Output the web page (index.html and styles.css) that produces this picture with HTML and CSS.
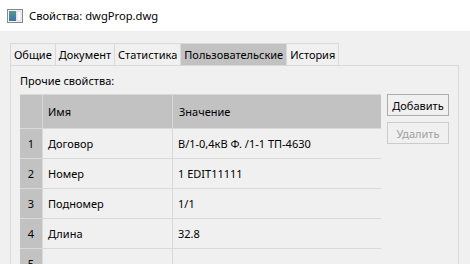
FILE: index.html
```html
<!DOCTYPE html>
<html lang="ru">
<head>
<meta charset="utf-8">
<title>Свойства: dwgProp.dwg</title>
<link rel="stylesheet" href="styles.css">
</head>
<body>
<div class="window">
  <div class="titlebar">
    <svg class="appicon" width="16" height="14" viewBox="0 0 16 14">
      <defs>
        <linearGradient id="g" x1="0" y1="0" x2="0" y2="1">
          <stop offset="0" stop-color="#5a9a8a"/>
          <stop offset="1" stop-color="#3f6fb0"/>
        </linearGradient>
      </defs>
      <rect x="0.5" y="0.5" width="15" height="13" fill="#f4f4f4" stroke="#8a8a8a"/>
      <rect x="2" y="2" width="7" height="10" fill="url(#g)"/>
      <rect x="10" y="2" width="4" height="10" fill="#ffffff" stroke="#c8c8c8" stroke-width="0.6"/>
    </svg>
    <span class="title">Свойства: dwgProp.dwg</span>
  </div>
  <div class="content">
    <div class="tabs">
      <div class="tab">Общие</div>
      <div class="tab">Документ</div>
      <div class="tab">Статистика</div>
      <div class="tab active">Пользовательские</div>
      <div class="tab">История</div>
    </div>
    <div class="pane">
      <div class="label">Прочие свойства:</div>
      <div class="body">
        <div class="grid">
          <div class="corner"></div>
          <div class="hcell">Имя</div>
          <div class="hcell">Значение</div>

          <div class="num">1</div>
          <div class="cell">Договор</div>
          <div class="cell">В/1-0,4кВ Ф. /1-1 ТП-4630</div>

          <div class="num">2</div>
          <div class="cell">Номер</div>
          <div class="cell">1 EDIT11111</div>

          <div class="num">3</div>
          <div class="cell">Подномер</div>
          <div class="cell">1/1</div>

          <div class="num">4</div>
          <div class="cell">Длина</div>
          <div class="cell">32.8</div>

          <div class="num">5</div>
          <div class="cell"></div>
          <div class="cell"></div>
        </div>
        <div class="buttons">
          <button class="btn">Добавить</button>
          <button class="btn" disabled>Удалить</button>
        </div>
      </div>
    </div>
  </div>
</div>
</body>
</html>
```

FILE: styles.css
```css
html, body {
  margin: 0;
  padding: 0;
}
body {
  width: 470px;
  height: 264px;
  overflow: hidden;
  background: #f0f0f0;
  font-family: "Noto Sans", "Liberation Sans", sans-serif;
  font-size: 11px;
  color: #000;
}
.window {
  display: flex;
  flex-direction: column;
  height: 264px;
}
.titlebar {
  height: 31px;
  background: #ffffff;
  display: flex;
  align-items: center;
  padding-left: 7px;
  flex-shrink: 0;
}
.appicon {
  display: block;
  margin-right: 6px;
  margin-top: 1px;
}
.title {
  font-size: 11.2px;
  line-height: 16px;
}
.content {
  padding: 12px 11px 0 10px;
  flex: 1;
  display: flex;
  flex-direction: column;
}
.tabs {
  display: flex;
  height: 22px;
}
.tab {
  border: 1px solid #d9d9d9;
  border-bottom: none;
  border-right: none;
  padding: 0 3px;
  line-height: 21px;
  background: #f0f0f0;
}
.tab:last-child {
  border-right: 1px solid #d9d9d9;
}
.tab.active {
  background: #c2c2c2;
}
.pane {
  flex: 1;
  border: 1px solid #d9d9d9;
  border-bottom: none;
  padding: 0 0 0 9px;
}
.label {
  height: 28px;
  line-height: 30px;
}
.body {
  display: flex;
  gap: 6px;
}
.grid {
  display: grid;
  grid-template-columns: 22px 129px 208px;
  grid-template-rows: 33px repeat(5, 29px);
  gap: 1px;
  background: #d9d9d9;
  border-top: 1px solid #d9d9d9;
  width: 361px;
}
.corner, .hcell, .num {
  background: #c2c2c2;
}
.hcell {
  padding-left: 5px;
  line-height: 33px;
}
.hcell + .hcell {
  padding-left: 6px;
}
.num {
  text-align: center;
  line-height: 30px;
}
.cell {
  background: #f0f0f0;
  padding-left: 5px;
  line-height: 30px;
  white-space: nowrap;
}
.buttons {
  display: flex;
  flex-direction: column;
  gap: 6px;
}
.btn {
  width: 62px;
  height: 22px;
  margin: 0;
  padding: 0;
  font-family: inherit;
  font-size: 11px;
  color: #000;
  background: #f0f0f0;
  border: 1px solid #adadad;
  border-radius: 0;
}
.btn:disabled {
  color: #a0a0a0;
  border-color: #cccccc;
}
```
